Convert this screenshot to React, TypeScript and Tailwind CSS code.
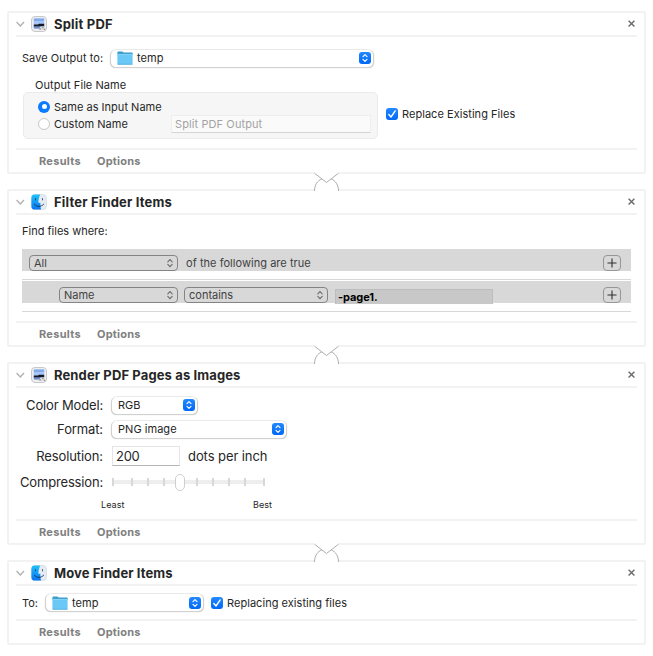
import React, { type ReactNode } from "react";

function Chevron() {
  return (
    <svg className="block h-[6px] w-[9px]" viewBox="0 0 9 6" fill="none">
      <path d="M.6 1l3.700 4L8 1" stroke="#b0b0b0" strokeWidth="1.300" />
    </svg>
  );
}

function PreviewIcon() {
  return (
    <svg className="block h-4 w-4" viewBox="0 0 16 16">
      <rect x="0.5" y="0.5" width="15" height="15" rx="3.4" fill="#eceef0" stroke="#c6c8cb" />
      <rect x="2.8" y="2.6" width="10.4" height="9.8" rx="0.8" fill="#a5c6f7" />
      <rect x="2.8" y="2.6" width="10.4" height="2.4" rx="0.8" fill="#82a9ea" />
      <rect x="2.8" y="9.8" width="7" height="2.6" rx="0.6" fill="#6f8cc6" />
      <path d="M2.8 8.400h4.200l1-.6h5.200v2.400H2.800z" fill="#141824" />
      <path d="M8 13.200l1.200-2.400 3.400-.2 1.800 1.200v2.200z" fill="#dedede" />
      <path d="M8.200 13h2M11.200 11.600h1.400M12.800 13.400h1.400" stroke="#6a6a6e" strokeWidth="0.8" />
    </svg>
  );
}

function FinderIcon({ id }: { id: string }) {
  return (
    <svg className="block h-4 w-4" viewBox="0 0 16 16">
      <defs>
        <linearGradient id={id} x1="0" y1="0" x2="0" y2="1">
          <stop offset="0" stopColor="#1fc2fb" />
          <stop offset="1" stopColor="#0b74f2" />
        </linearGradient>
      </defs>
      <rect x="0.5" y="0.5" width="15" height="15" rx="3.4" fill="#e4ebf2" stroke="#cfd6de" strokeWidth="0.6" />
      <path d="M3.8.4h5.4C8 3.3 7.5 5.6 7.3 8.8h2.1c-.1 2.6.1 4.6.7 6.8H3.8A3.4 3.4 0 0 1 .4 12.2V3.8A3.4 3.4 0 0 1 3.8.4z" fill={`url(#${id})`} />
      <path d="M4.500 4.600v1.300M11.500 4.600v1.300" stroke="#14324f" strokeWidth="0.8" strokeLinecap="round" />
      <path d="M3.400 10.300c2.600 2.800 6.600 2.800 9.200 0" fill="none" stroke="#14324f" strokeWidth="0.9" strokeLinecap="round" />
    </svg>
  );
}

function Folder() {
  return (
    <svg className="block h-[14px] w-4" viewBox="0 0 16 14">
      <path d="M.4 1.6Q.4.4 1.4.4h4l1.3 1.2h8q1 0 1 1V4H.4z" fill="#3a9cc9" />
      <rect x="0.4" y="3" width="15.2" height="10.6" rx="0.7" fill="#69c8f6" />
      <path d="M.4 3.4h15.2" stroke="#8bd8fb" strokeWidth="0.8" />
      <path d="M.6 13.3h14.8" stroke="#46a5d6" strokeWidth="0.7" />
    </svg>
  );
}

function Stepper() {
  return (
    <span className="flex h-3 w-3 shrink-0 items-center justify-center rounded-[3px] bg-linear-to-b from-[#2289ff] to-[#0068f5]">
      <svg className="block h-3 w-3" viewBox="0 0 12 12" fill="none">
        <path d="M4 4.7l2-2 2 2M4 7.3l2 2 2-2" stroke="#fff" strokeWidth="1.15" strokeLinecap="round" strokeLinejoin="round" />
      </svg>
    </span>
  );
}

function Popup({ className, children }: { className: string; children: ReactNode }) {
  return (
    <div className={`flex h-[17px] shrink-0 items-center justify-between rounded-[5px] bg-white pr-[2px] shadow-[0_0_0_0.5px_#dcdcdc,0_0.5px_1px_0.5px_#c0c0c0] ${className}`}>
      <span className="flex items-center">{children}</span>
      <Stepper />
    </div>
  );
}

function Checkbox() {
  return (
    <span className="block h-3 w-3 shrink-0 rounded-[3px] bg-linear-to-b from-[#2289ff] to-[#0068f5]">
      <svg className="block h-3 w-3" viewBox="0 0 12 12" fill="none">
        <path d="M2.8 6.5L5 9l4.2-6.1" stroke="#fff" strokeWidth="1.4" strokeLinecap="round" strokeLinejoin="round" />
      </svg>
    </span>
  );
}

function GrayPopup({ className, label }: { className: string; label: string }) {
  return (
    <div className={`flex h-4 shrink-0 items-center justify-between rounded-[4px] border border-[#848484] pl-1 pr-[3px] text-[#424242] ${className}`}>
      <span>{label}</span>
      <svg className="block h-[10px] w-2" viewBox="0 0 8 10" fill="none">
        <path d="M1.800 3.800L4 1.600l2.200 2.200M1.800 6.400L4 8.600l2.200-2.200" stroke="#6c6c6c" strokeWidth="1.100" strokeLinecap="round" />
      </svg>
    </div>
  );
}

function PlusButton() {
  return (
    <span className="flex h-4 w-[18px] shrink-0 items-center justify-center rounded-[4px] border border-[#969696]">
      <svg className="block h-[10px] w-[10px]" viewBox="0 0 10 10">
        <path d="M5 .5v9M.5 5h9" stroke="#2e2e2e" strokeWidth="1.1" />
      </svg>
    </span>
  );
}

/* Joins an action to the one above it; spans both borders and the gap between. */
function Connector() {
  return (
    <svg className="absolute left-[304px] top-[-19px] block h-[19px] w-[27px]" viewBox="0 0 27 19" fill="none">
      <path d="M1.500 0h24v2L13.500 11 1.500 2zM1.500 19C1.500 13 5 8.500 9 7.500l4.500 3.500L18 7.500c4 1 7.500 5.500 7.500 11.500z" fill="#fff" />
      <path d="M1.500 1.200L13.500 10.500 25.500 1.200M1.500 19C1.500 13 4.500 8.500 8.800 7M25.500 19C25.500 13 22.500 8.500 18.200 7" stroke="#a4a4a4" strokeWidth="0.9" />
    </svg>
  );
}

interface ActionProps {
  title: string;
  icon: ReactNode;
  titleClass: string;
  bodyClass: string;
  linked?: boolean;
  children: ReactNode;
}

function Action({ title, icon, titleClass, bodyClass, linked, children }: ActionProps) {
  return (
    <section className="relative w-[639px] rounded-[2px] border-2 border-[#f2f2f2] bg-white">
      {linked && <Connector />}
      <header className="mx-[7px] flex h-6 items-center border-b-2 border-[#f2f2f2] pr-[1px]">
        <span className="w-[15px]"><Chevron /></span>
        {icon}
        <h2 className={`ml-[7px] text-[13px] font-bold leading-[22px] text-[#262626] ${titleClass}`}>{title}</h2>
        <svg className="ml-auto block h-2 w-2" viewBox="0 0 8 8">
          <path d="M.6.700l5.800 5.800M6.400.700L.600 6.500" stroke="#6e6e6e" strokeWidth="1.500" />
        </svg>
      </header>
      <div className={bodyClass}>{children}</div>
      <footer className="mx-[7px] flex h-6 items-center border-t-2 border-[#f2f2f2] pl-[23px] text-[11px] font-bold text-[#808080]">
        <span className="w-[58px] tracking-[0.28px]">Results</span>
        <span className="tracking-[0.22px]">Options</span>
      </footer>
    </section>
  );
}

export default function App() {
  return (
    <main className="flex h-[656px] w-[653px] flex-col gap-[15px] overflow-hidden bg-white pl-[7px] pt-[11px] font-[Inter,sans-serif] text-[11px] leading-[14px] whitespace-nowrap text-[#262626]">
      <Action title="Split PDF" icon={<PreviewIcon />} titleClass="tracking-[0.2px]" bodyClass="h-[111px] pl-[13px] pt-3">
        <div className="flex h-[18px] items-center">
          <span className="w-[89px] tracking-[0.06px]">Save Output to:</span>
          <Popup className="w-[262px] pl-[6px]">
            <Folder />
            <span className="ml-1 tracking-[0.06px]">temp</span>
          </Popup>
        </div>
        <div className="flex items-end">
          <div>
            <div className="mt-[11px] pl-[13px] tracking-[0.06px]">Output File Name</div>
            <div className="ml-[1px] h-[47px] w-[355px] rounded-[5px] border border-[#ebebeb] bg-[#f6f6f6] pl-[14px] pt-[5px]">
              <div className="flex h-[17px] items-center">
                <span className="flex h-3 w-3 items-center justify-center rounded-full bg-[#0a7aff]">
                  <span className="h-[5px] w-[5px] rounded-full bg-white" />
                </span>
                <span className="ml-1 pt-[1px] tracking-[0.02px]">Same as Input Name</span>
              </div>
              <div className="flex h-[17px] items-center">
                <span className="h-3 w-3 rounded-full border border-[#c8c8c8] bg-white" />
                <span className="ml-1 w-[117px] tracking-[0.02px]">Custom Name</span>
                <span className="flex h-[18px] w-[200px] items-center border border-[#eeeeee] border-b-[#d5d5d5] bg-[#fafafa] pl-[3px] tracking-[0.1px] text-[#a3a3a3]">Split PDF Output</span>
              </div>
            </div>
          </div>
          <div className="mb-[18px] ml-2 flex h-[14px] items-center">
            <Checkbox />
            <span className="ml-1 tracking-[0.04px]">Replace Existing Files</span>
          </div>
        </div>
      </Action>

      <Action title="Filter Finder Items" icon={<FinderIcon id="finder-a" />} titleClass="tracking-[0.18px]" bodyClass="h-[106px] px-[13px] pt-[9px]" linked>
        <div className="h-[25px]">Find files where:</div>
        <div className="h-[31px] w-[609px] border-b border-[#d8d8d8]">
          <div className="flex h-[22px] bg-[#d8d8d8] pl-[7px] pr-[10px] pt-[6px]">
            <GrayPopup className="w-[149px]" label="All" />
            <span className="ml-2 mt-[1px] tracking-[0.04px] text-[#424242]">of the following are true</span>
            <span className="ml-auto"><PlusButton /></span>
          </div>
        </div>
        <div className="mt-[1px] h-[31px] w-[609px] border-b border-[#d8d8d8]">
          <div className="flex h-[22px] bg-[#d8d8d8] pl-[37px] pr-[10px] pt-[6px]">
            <GrayPopup className="w-[119px]" label="Name" />
            <GrayPopup className="ml-[6px] w-[144px]" label="contains" />
            <span className="ml-[7px] mt-[2px] h-[15px] w-[158px] border border-b-0 border-[#bdbdbd] bg-[#c8c8c8] pl-[2px] font-bold leading-[15px] tracking-[-0.08px] text-black">-page1.</span>
            <span className="ml-auto"><PlusButton /></span>
          </div>
        </div>
      </Action>

      <Action title="Render PDF Pages as Images" icon={<PreviewIcon />} titleClass="tracking-[0.12px]" bodyClass="h-[131px] pl-[9px] pt-[5px] text-[13px]" linked>
        <div className="flex h-6 items-center">
          <span className="w-[85px] pb-[1px] text-right tracking-[-0.15px]">Color Model:</span>
          <Popup className="ml-[9px] w-[85px] pl-[6px] text-[11px]">RGB</Popup>
        </div>
        <div className="flex h-6 items-center">
          <span className="w-[85px] pb-[1px] text-right tracking-[-0.12px]">Format:</span>
          <Popup className="ml-[9px] w-[174px] pl-[6px] text-[11px]"><span className="tracking-[0.04px]">PNG image</span></Popup>
        </div>
        <div className="mt-[5px] flex h-5 items-center">
          <span className="w-[85px] text-right tracking-[-0.1px]">Resolution:</span>
          <span className="ml-[9px] flex h-5 w-[68px] items-center border border-[#e4e4e4] border-b-[#b5b5b5] pl-[3px] tracking-[-0.3px]">200</span>
          <span className="ml-2 tracking-[-0.08px]">dots per inch</span>
        </div>
        <div className="mt-2 flex h-[17px] items-center">
          <span className="w-[85px] pb-[1px] text-right tracking-[-0.17px]">Compression:</span>
          <svg className="ml-[9px] block h-[17px] w-[154px]" viewBox="0 0 154 17">
            <rect x="0" y="6" width="153" height="4" rx="1.500" fill="#eeeeee" />
            {[0, 19, 35, 51, 84, 100, 116, 132, 151].map((x) => (
              <rect key={x} x={x} y="4" width="2" height="8" fill="#d8d8d8" />
            ))}
            <rect x="63.500" y="0.500" width="9" height="16" rx="4.500" fill="#fff" stroke="#cecece" />
          </svg>
        </div>
        <div className="mt-[7px] flex pl-[83px] text-[9px]">
          <span className="w-[152px] tracking-[0.05px]">Least</span>
          <span className="tracking-[0.05px]">Best</span>
        </div>
      </Action>

      <Action title="Move Finder Items" icon={<FinderIcon id="finder-b" />} titleClass="tracking-[0.08px]" bodyClass="flex h-[33px] items-center pl-[13px]" linked>
        <span className="w-6">To:</span>
        <Popup className="w-[157px] pl-[6px]">
          <Folder />
          <span className="ml-1 tracking-[0.06px]">temp</span>
        </Popup>
        <span className="ml-2"><Checkbox /></span>
        <span className="ml-1 tracking-[0.04px]">Replacing existing files</span>
      </Action>
    </main>
  );
}
